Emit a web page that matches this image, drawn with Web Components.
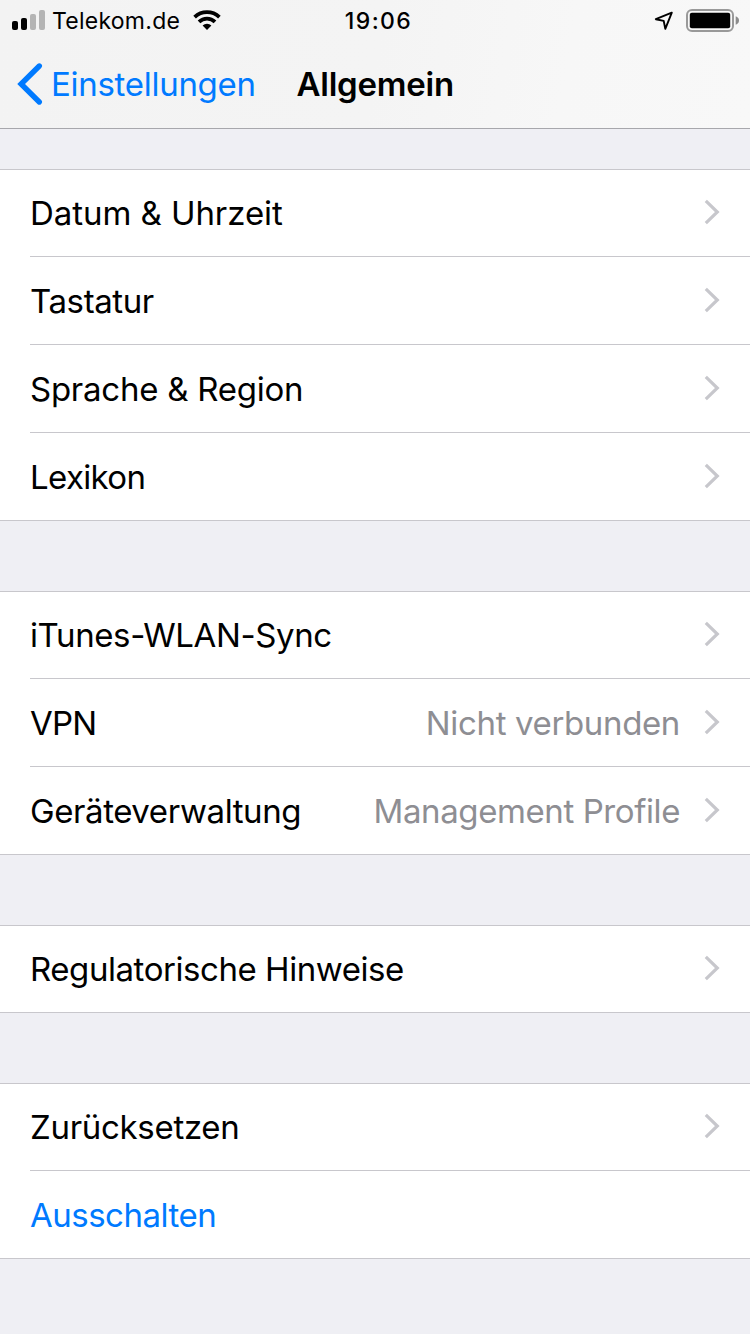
<!DOCTYPE html>
<html lang="de">
<head>
<meta charset="utf-8">
<title>Allgemein</title>
<style>
html,body{margin:0;height:100%}
body{background:#efeff4;color:#000;font:400 33px/40px Inter,"Liberation Sans",sans-serif;overflow:hidden}
</style>
</head>
<body>
<settings-screen></settings-screen>
<script>
const define = (name, html, setup) => customElements.define(name, class extends HTMLElement {
  constructor() {
    super();
    this.attachShadow({ mode: 'open' }).innerHTML = html;
  }
  connectedCallback() { if (setup) setup(this, this.shadowRoot); }
});

define('signal-bars', `<style>:host{display:block;width:33px;height:20px}svg{display:block}</style>
<svg width="33" height="20"><rect y="11" width="6" height="9" rx="2"/><rect x="9" y="8" width="6" height="12" rx="2"/><g fill="#b4b4b4"><rect x="18" y="4" width="6" height="16" rx="2"/><rect x="27" width="6" height="20" rx="2"/></g></svg>`);

define('wifi-icon', `<style>:host{display:block;width:28px;height:20px}svg{display:block}</style>
<svg width="28" height="20" viewBox="0 0 28 20"><g fill="none" stroke="#000"><path stroke-width="3.8" d="M1.6 7.1A18.2 18.2 0 0 1 26.4 7.1"/><path stroke-width="3.7" d="M6 11.9A11.4 11.4 0 0 1 22 11.9"/></g><path d="M14 20 9.6 15.6A6.2 6.2 0 0 1 18.4 15.6Z"/></svg>`);

define('location-icon', `<style>:host{display:block;width:20px;height:20px}svg{display:block}</style>
<svg width="20" height="20" viewBox="0 0 20 20"><path fill="none" stroke="#000" stroke-width="1.9" stroke-linejoin="round" d="M17.8 2.6 1.8 9.2 9.7 10.9 11.3 18.8Z"/></svg>`);

define('battery-icon', `<style>:host{display:block;width:53px;height:23px}svg{display:block}</style>
<svg width="53" height="23"><rect x="1" y="1" width="46" height="21" rx="5" fill="none" stroke="#999" stroke-width="2"/><rect x="3.8" y="3.8" width="40.4" height="15.4" rx="2"/><path fill="#8c8c8c" d="M49.7 7.2Q53 8.4 53 11.5T49.7 15.8Z"/></svg>`);

define('status-bar', `<style>
:host{display:grid;grid-template-columns:1fr auto 1fr;align-items:center;height:40px;padding:0 11px 0 12px;font-size:23px;line-height:28px}
.left,.right{display:flex;align-items:center}
.carrier{margin:1px 0 0 7px;letter-spacing:.256px;white-space:nowrap}
wifi-icon{margin-left:13px}
time{font-weight:500;letter-spacing:1.4px;padding:1px 0 0 6px}
.right{justify-content:flex-end;gap:12px}
battery-icon{margin-top:1px}
</style>
<div class="left"><signal-bars></signal-bars><span class="carrier">Telekom.de</span><wifi-icon></wifi-icon></div>
<time>19:06</time>
<div class="right"><location-icon></location-icon><battery-icon></battery-icon></div>`);

define('nav-bar', `<style>
:host{display:grid;grid-template-columns:1fr auto 1fr;align-items:center;height:88px;box-sizing:border-box;padding:0 16px}
.back{display:flex;align-items:center;color:#007aff;letter-spacing:-.286px}
svg{display:block;margin-right:7px}
h1{font:inherit;font-weight:600;margin:0;letter-spacing:-.23px;padding-left:.5px}
</style>
<div class="back"><svg width="28" height="44"><path fill="none" stroke="#007aff" stroke-width="5.4" stroke-linecap="round" d="M23.3 4 5.1 22 23.3 40"/></svg><slot name="back"></slot></div>
<h1><slot></slot></h1>`);

define('settings-row', `<style>
:host{display:flex;align-items:center;height:87px;margin-left:30px;padding-right:30px;border-bottom:1px solid #c8c7cc;white-space:nowrap}
:host(:first-child){height:86px}
:host(:last-child){margin-left:0;padding-left:30px;border-bottom:0}
:host([action]){color:#007aff}
.label{flex:1;letter-spacing:var(--track,0)}
.value{color:#8e8e93;letter-spacing:var(--value-track,0);margin-right:24px}
svg{display:block;margin-bottom:2px}
:host([action]) svg{display:none}
</style>
<span class="label"><slot></slot></span><span class="value"><slot name="value"></slot></span>
<svg width="16" height="26"><path fill="none" stroke="#c7c7cc" stroke-width="3.2" d="M1.8 1.8 13.3 13 1.8 24.2"/></svg>`, (host) => {
  for (const key of ['track', 'value-track'])
    if (host.hasAttribute(key)) host.style.setProperty('--' + key, host.getAttribute(key) + 'px');
});

define('settings-group', `<style>
:host{display:block;background:#fff;border:solid #c8c7cc;border-width:1px 0}
</style><slot></slot>`);

define('settings-screen', `<style>
:host{display:flex;flex-direction:column;height:1334px}
header{background:linear-gradient(100deg,#f3f3f3,#f4f4f4 50%,#f7f7f7 75%,#f8f8f8);border-bottom:1px solid #a7a7ac}
main{display:flex;flex-direction:column;gap:70px;padding-top:40px}
</style>
<header><status-bar></status-bar><nav-bar><span slot="back">Einstellungen</span>Allgemein</nav-bar></header>
<main>
<settings-group>
<settings-row track="-.06">Datum &amp; Uhrzeit</settings-row>
<settings-row track="-.4">Tastatur</settings-row>
<settings-row track="-.253">Sprache &amp; Region</settings-row>
<settings-row track="-.64">Lexikon</settings-row>
</settings-group>
<settings-group>
<settings-row track="-.4">iTunes-WLAN-Sync</settings-row>
<settings-row track="-.8" value-track="-.36">VPN<span slot="value">Nicht verbunden</span></settings-row>
<settings-row track="-.42" value-track="-.406">Geräteverwaltung<span slot="value">Management Profile</span></settings-row>
</settings-group>
<settings-group>
<settings-row track="-.445">Regulatorische Hinweise</settings-row>
</settings-group>
<settings-group>
<settings-row track="-.3">Zurücksetzen</settings-row>
<settings-row track="-.5" action>Ausschalten</settings-row>
</settings-group>
</main>`);
</script>
</body>
</html>
